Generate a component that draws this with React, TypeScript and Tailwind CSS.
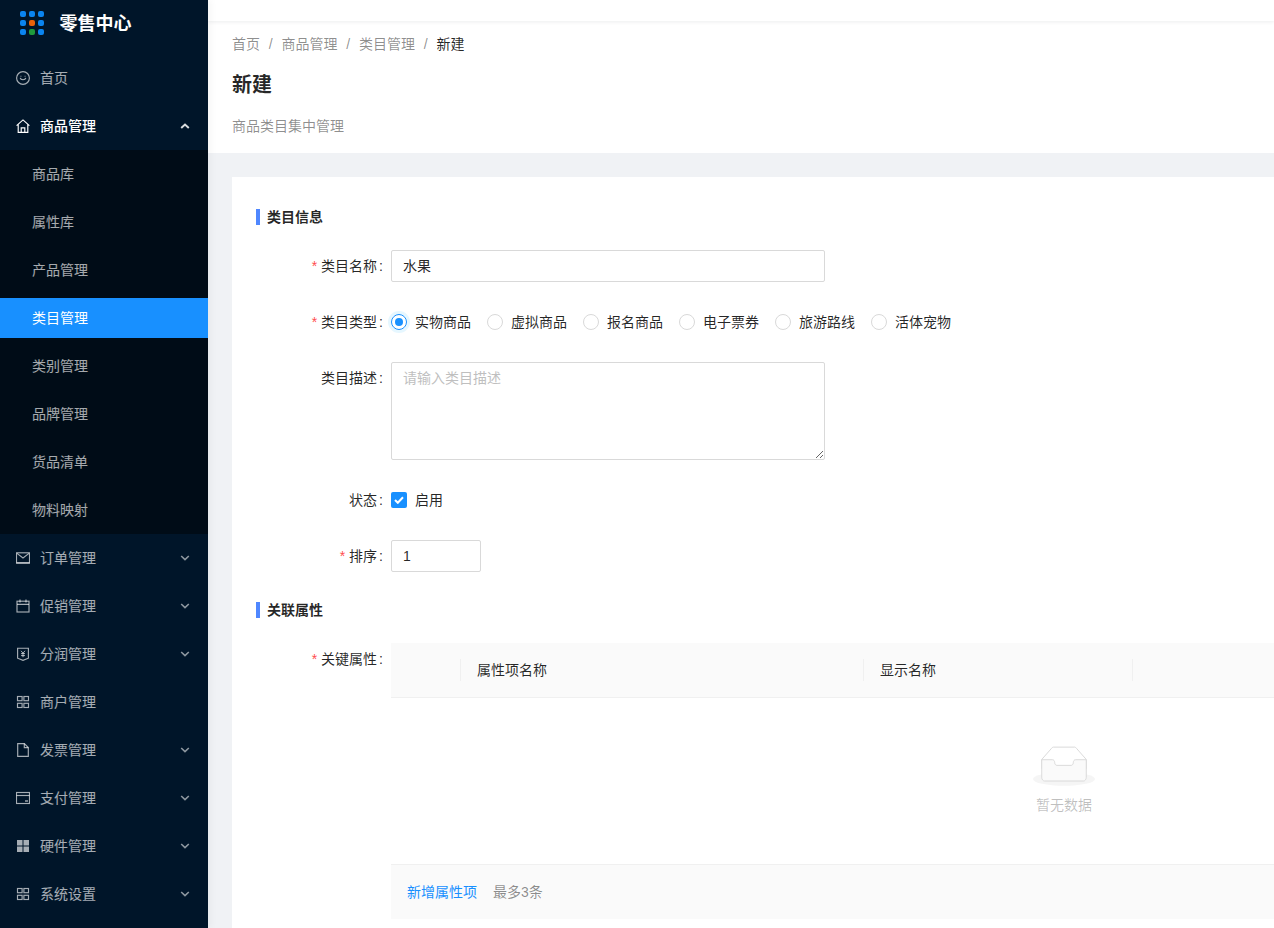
import type { ReactNode } from 'react'

const font = 'font-["Liberation_Sans","Noto_Sans_CJK_SC",sans-serif]'

function Svg({ children }: { children: ReactNode }) {
  return (
    <svg width="14" height="14" viewBox="0 0 14 14" fill="none" stroke="currentColor" strokeWidth="1.15" className="shrink-0">
      {children}
    </svg>
  )
}

const icons: Record<string, ReactNode> = {
  smile: (
    <Svg>
      <circle cx="7" cy="7" r="6.4" />
      <path d="M4.2 6.8c.5 2.6 5.1 2.6 5.6 0" />
      <path d="M4.5 5.2h.9M8.6 5.2h.9" />
    </Svg>
  ),
  home: (
    <Svg>
      <path d="M.6 6.6 7 .9l6.4 5.7M2.2 5.5v7.9h9.6V5.5" />
      <path d="M5.2 13.2V8.8h3.6v4.4" />
    </Svg>
  ),
  mail: (
    <Svg>
      <rect x=".5" y="1.8" width="13" height="10.4" />
      <path d="m1 2.4 6 4.6 6-4.6" />
      <path d="M.5 11.7h13" strokeWidth="1.2" />
    </Svg>
  ),
  calendar: (
    <Svg>
      <rect x="1" y="2.2" width="12" height="10.8" />
      <path d="M1 5.4h12M4 .6v3M10 .6v3" />
    </Svg>
  ),
  shield: (
    <Svg>
      <path d="M1.6 1.2h10.8v10L7 13.4l-5.4-2.2z" />
      <path d="M5 3.8 7 6.2l2-2.4M5 6.6h4M5 8.6h4M7 6.2v4" strokeWidth="1" />
    </Svg>
  ),
  grid: (
    <Svg>
      <rect x="1.5" y="1.5" width="4.6" height="4.2" />
      <rect x="7.9" y="1.5" width="4.6" height="4.2" />
      <rect x="1.5" y="8.3" width="4.6" height="4.2" />
      <rect x="7.9" y="8.3" width="4.6" height="4.2" />
    </Svg>
  ),
  file: (
    <Svg>
      <path d="M1.7.6h6.6l4 4v8.8H1.7z" />
      <path d="M8.3.6v4h4" />
    </Svg>
  ),
  wallet: (
    <Svg>
      <rect x=".5" y="1.5" width="13" height="11" />
      <path d="M.5 4.5h13" />
      <path d="M9 10h3" strokeWidth="1.4" />
    </Svg>
  ),
  windows: (
    <Svg>
      <g fill="currentColor" stroke="none">
        <rect x="1" y="1" width="5.5" height="5.5" />
        <rect x="7.5" y="1" width="5.5" height="5.5" />
        <rect x="1" y="7.5" width="5.5" height="5.5" />
        <rect x="7.5" y="7.5" width="5.5" height="5.5" />
      </g>
    </Svg>
  ),
}

function Chevron({ up }: { up?: boolean }) {
  return (
    <svg width="10" height="6" viewBox="0 0 10 6" fill="none" stroke="currentColor" strokeWidth={up ? 2 : 1.6} className="mr-[18px] ml-auto mt-[-1px] opacity-85">
      <path d={up ? 'M1.2 5 5 1.6 8.8 5' : 'M1.2 1 5 4.6 8.8 1'} />
    </svg>
  )
}

function Logo() {
  const dots = ['#0a84ef', '#0a84ef', '#0a84ef', '#0a84ef', '#e8610a', '#0a84ef', '#0a84ef', '#1f9a3c', '#0a84ef']
  return (
    <div className="grid grid-cols-3 gap-[3.5px]">
      {dots.map((c, i) => (
        <span key={i} className="block h-[5.5px] w-[5.5px] rounded-[2px]" style={{ backgroundColor: c }} />
      ))}
    </div>
  )
}

const subMenu = ['商品库', '属性库', '产品管理', '类目管理', '类别管理', '品牌管理', '货品清单', '物料映射']

const lowerMenu: { title: string; icon: string; arrow: boolean }[] = [
  { title: '订单管理', icon: 'mail', arrow: true },
  { title: '促销管理', icon: 'calendar', arrow: true },
  { title: '分润管理', icon: 'shield', arrow: true },
  { title: '商户管理', icon: 'grid', arrow: false },
  { title: '发票管理', icon: 'file', arrow: true },
  { title: '支付管理', icon: 'wallet', arrow: true },
  { title: '硬件管理', icon: 'windows', arrow: true },
  { title: '系统设置', icon: 'grid', arrow: true },
]

function Sidebar() {
  return (
    <aside className="relative z-10 flex h-full w-[208px] shrink-0 flex-col bg-[#001529] text-sm text-white/65 shadow-[2px_0_8px_rgba(29,35,41,0.05)]">
      <div className="flex h-[54px] items-start pt-[11px] pl-5">
        <Logo />
        <span className="ml-4 text-lg leading-[26px] font-bold text-white">零售中心</span>
      </div>
      <div className="flex h-12 items-center gap-[10px] pl-4">
        {icons.smile}
        <span>首页</span>
      </div>
      <div className="flex h-12 items-center gap-[10px] pl-4 text-white">
        {icons.home}
        <span className="font-medium">商品管理</span>
        <Chevron up />
      </div>
      <div className="bg-[#000c17]">
        {subMenu.map((item) =>
          item === '类目管理' ? (
            <div key={item} className="my-1 flex h-10 items-center bg-[#1890ff] pl-8 text-white">
              {item}
            </div>
          ) : (
            <div key={item} className="flex h-12 items-center pl-8">
              {item}
            </div>
          ),
        )}
      </div>
      {lowerMenu.map((m) => (
        <div key={m.title} className="flex h-12 shrink-0 items-center gap-[10px] pl-4">
          {icons[m.icon]}
          <span>{m.title}</span>
          {m.arrow && <Chevron />}
        </div>
      ))}
    </aside>
  )
}

function SectionTitle({ children, className }: { children: ReactNode; className: string }) {
  return (
    <div className={`flex h-4 items-center gap-[7px] ${className}`}>
      <span className="h-4 w-1 bg-[#4f87ff]" />
      <span className="font-bold text-black/85">{children}</span>
    </div>
  )
}

function Field({ label, required, className, children }: { label: string; required?: boolean; className?: string; children: ReactNode }) {
  return (
    <div className={`flex items-start ${className ?? ''}`}>
      <label className="h-8 w-[135px] shrink-0 text-right leading-8 text-black/85">
        {required && <span className="mr-1 text-[#ff4d4f]">*</span>}
        {label}
        <span className="mr-2 ml-[2px]">:</span>
      </label>
      {children}
    </div>
  )
}

const radios = ['实物商品', '虚拟商品', '报名商品', '电子票券', '旅游路线', '活体宠物']

function App() {
  return (
    <div className={`flex h-screen w-full overflow-hidden bg-[#f0f2f5] text-sm ${font}`}>
      <Sidebar />
      <main className="min-w-0 flex-1">
        <div className="relative h-[21px] bg-white shadow-[0_1px_4px_rgba(0,21,41,0.08)]" />
        <div className="h-[132px] bg-white px-6 pt-3">
          <div className="flex h-[22px] items-center text-black/45">
            <span>首页</span>
            <span className="mx-[8.8px]">/</span>
            <span>商品管理</span>
            <span className="mx-[8.8px]">/</span>
            <span>类目管理</span>
            <span className="mx-[8.8px]">/</span>
            <span className="text-black/85">新建</span>
          </div>
          <h1 className="mt-4 text-xl leading-7 font-semibold text-black/85">新建</h1>
          <p className="mt-4 leading-[22px] text-black/45">商品类目集中管理</p>
        </div>
        <div className="ml-6 mt-6 w-[1530px] bg-white px-6 pt-8 pb-6">
          <SectionTitle className="">类目信息</SectionTitle>
          <Field label="类目名称" required className="mt-[25px]">
            <input
              readOnly
              value="水果"
              className="h-8 w-[434px] rounded-[2px] border border-[#d9d9d9] px-[11px] pb-[2px] text-black/85 outline-none"
            />
          </Field>
          <Field label="类目类型" required className="mt-6">
            <div className="flex h-8 items-center gap-4">
              {radios.map((r, i) => (
                <span key={r} className="flex items-center gap-2 text-black/85">
                  {i === 0 ? (
                    <span className="flex h-4 w-4 items-center justify-center rounded-full border border-[#1890ff] shadow-[0_0_0_3px_#e6f7ff]">
                      <span className="h-2 w-2 rounded-full bg-[#1890ff]" />
                    </span>
                  ) : (
                    <span className="h-4 w-4 rounded-full border border-[#d9d9d9]" />
                  )}
                  {r}
                </span>
              ))}
            </div>
          </Field>
          <Field label="类目描述" className="mt-6">
            <textarea
              readOnly
              placeholder="请输入类目描述"
              className="block h-[98px] w-[434px] rounded-[2px] border border-[#d9d9d9] px-[11px] py-[5px] text-black/85 outline-none placeholder:text-[#bfbfbf]"
            />
          </Field>
          <Field label="状态" className="mt-6">
            <div className="flex h-8 items-center gap-2 text-black/85">
              <span className="flex h-4 w-4 items-center justify-center rounded-[2px] bg-[#1890ff]">
                <svg width="10" height="8" viewBox="0 0 10 8" fill="none" stroke="white" strokeWidth="2">
                  <path d="M1 4l2.8 2.8L9 1.2" />
                </svg>
              </span>
              启用
            </div>
          </Field>
          <Field label="排序" required className="mt-6">
            <input
              readOnly
              value="1"
              className="h-8 w-[90px] rounded-[2px] border border-[#d9d9d9] px-[11px] text-black/85 outline-none"
            />
          </Field>
          <SectionTitle className="mt-[30px]">关联属性</SectionTitle>
          <Field label="关键属性" required className="mt-[25px]">
            <div className="w-[1346px]">
              <div className="flex h-[55px] items-center border-b border-[#f0f0f0] bg-[#fafafa] text-black/85">
                <div className="h-[22px] w-[70px] border-r border-[#f0f0f0]" />
                <div className="h-[22px] w-[403px] border-r border-[#f0f0f0] pl-4 leading-[22px]">属性项名称</div>
                <div className="h-[22px] w-[269px] border-r border-[#f0f0f0] pl-4 leading-[22px]">显示名称</div>
              </div>
              <div className="flex h-[166px] flex-col items-center pt-[48px]">
                <svg width="62" height="40" viewBox="0 0 64 41">
                  <g transform="translate(0 1)" fill="none" fillRule="evenodd">
                    <ellipse fill="#f5f5f5" cx="32" cy="33" rx="32" ry="7" />
                    <g fillRule="nonzero" stroke="#d9d9d9">
                      <path d="M55 12.76L44.854 1.258C44.367.474 43.656 0 42.907 0H21.093c-.749 0-1.46.474-1.947 1.257L9 12.761V22h46v-9.24z" />
                      <path
                        d="M41.613 15.931c0-1.605.994-2.93 2.227-2.931H55v18.137C55 33.26 53.68 35 52.05 35h-40.1C10.32 35 9 33.259 9 31.137V13h11.16c1.233 0 2.227 1.323 2.227 2.928v.022c0 1.605 1.005 2.901 2.237 2.901h14.752c1.232 0 2.237-1.308 2.237-2.913v-.007z"
                        fill="#fafafa"
                      />
                    </g>
                  </g>
                </svg>
                <p className="mt-2 leading-[22px] text-black/25">暂无数据</p>
              </div>
              <div className="flex h-[55px] items-center gap-4 border-t border-[#f0f0f0] bg-[#fafafa] pl-4">
                <span className="text-[#1890ff]">新增属性项</span>
                <span className="text-black/45">最多3条</span>
              </div>
            </div>
          </Field>
        </div>
      </main>
    </div>
  )
}

export default App
